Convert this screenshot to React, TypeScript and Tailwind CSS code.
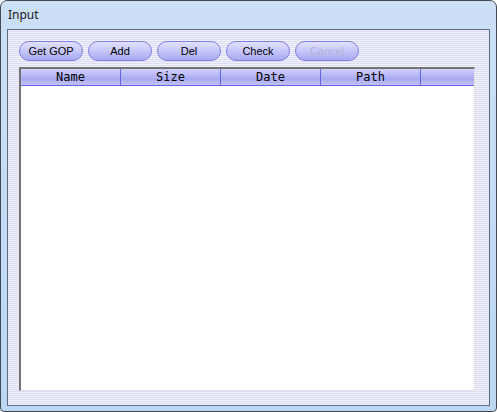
import React from 'react';

const buttons = [
  { label: 'Get GOP', disabled: false },
  { label: 'Add', disabled: false },
  { label: 'Del', disabled: false },
  { label: 'Check', disabled: false },
  { label: 'Cancel', disabled: true },
];

const columns = ['Name', 'Size', 'Date', 'Path'];

function PillButton({ label, disabled }: { label: string; disabled: boolean }) {
  return (
    <button
      disabled={disabled}
      className={
        'w-[64px] h-[20px] rounded-full border border-[#7f7fe2] bg-gradient-to-b from-[#e2e2ff] via-[#c6c6fb] to-[#a9a9f0] text-[11px] leading-none font-["Liberation_Sans",Arial,sans-serif] ' +
        (disabled ? 'text-[#b4b4d2]' : 'text-black')
      }
    >
      {label}
    </button>
  );
}

export default function App() {
  return (
    <div className="w-[497px] h-[412px] bg-white">
      <div className="w-[497px] h-[412px] rounded-t-[7px] rounded-b-[4px] border border-[#434a55] bg-gradient-to-b from-[#cbe0f6] to-[#bdd7f2] flex flex-col px-[6px] pb-[5px]">
        <div className="h-[28px] flex items-center pl-[1px] text-[12px] text-[#1a1a1a] font-['Noto_Sans',sans-serif]">
          Input
        </div>
        <div className="flex-1 flex flex-col border border-[#5b6a7f] bg-[repeating-linear-gradient(to_bottom,#f1f1fc_0px,#f1f1fc_1px,#dcdcf3_1px,#dcdcf3_2px)] pt-[11px] pl-[11px] pr-[14px] pb-[14px]">
          <div className="flex gap-[5px]">
            {buttons.map((b) => (
              <PillButton key={b.label} label={b.label} disabled={b.disabled} />
            ))}
          </div>
          <div className="mt-[6px] flex-1 flex flex-col border-t-2 border-l-2 border-[#747474] border-r border-b border-r-[#e2e2e2] border-b-[#e2e2e2] bg-white">
            <div className="flex h-[17px] border-b border-[#6464e6] bg-[linear-gradient(to_bottom,#d2d2fd_0%,#b8b8f7_40%,#a9a9f3_62%,#c2c2f9_100%)] text-[12px] leading-[16px] text-black font-['DejaVu_Sans_Mono',monospace]">
              {columns.map((c) => (
                <div key={c} className="w-[100px] border-r border-[#6464e6] text-center">
                  {c}
                </div>
              ))}
              <div className="flex-1" />
            </div>
            <div className="flex-1" />
          </div>
        </div>
      </div>
    </div>
  );
}
